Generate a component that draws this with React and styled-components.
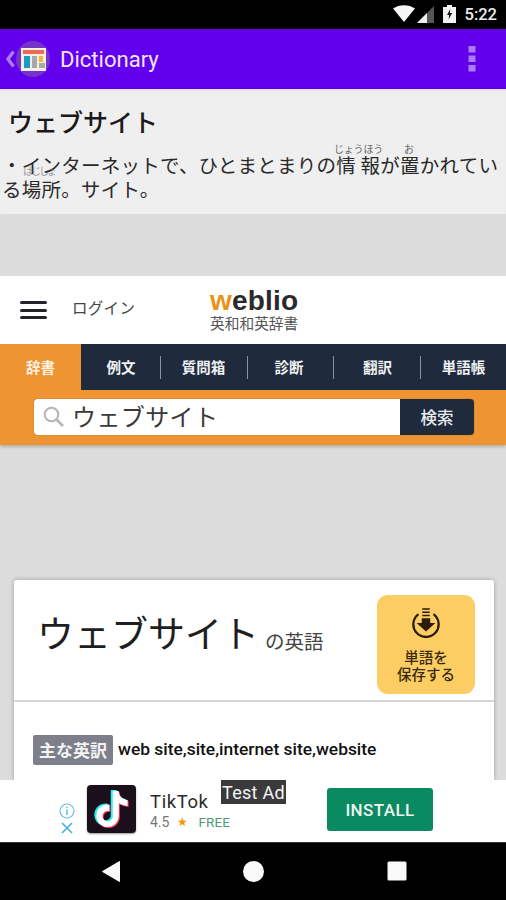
import React from "react";
import styled, { createGlobalStyle } from "styled-components";
import { SiTiktok } from "react-icons/si";

const Global = createGlobalStyle`
  html, body { margin: 0; padding: 0; background: #000; }
  * { box-sizing: border-box; }
  #root { width: 506px; height: 900px; }
`;
const JP = `"Noto Sans CJK JP", "Noto Sans", sans-serif`;
const Screen = styled.div`
  width: 506px; height: 900px; display: flex; flex-direction: column; overflow: hidden;
  background: #dcdcdc; font-family: ${JP}; color: #1c1c1c;
`;
const StatusBar = styled.div`
  height: 29px; flex: none; background: #000; display: flex; align-items: center; justify-content: flex-end;
  gap: 8px; padding: 0 9px 1px 0; color: #ececec; font: 500 16.5px Roboto, sans-serif;
`;
const StatusIcons = styled.div`display: flex; align-items: center; gap: 9px; margin-right: 1px;`;
const WifiGroup = styled.div`display: flex; align-items: center; gap: 2px;`;
const AppBar = styled.div`
  height: 60px; flex: none; background: #6200ee; display: flex; align-items: center; padding: 0 30px 0 5px; color: #f0e6ff;
`;
const AppTitle = styled.div`font: 400 22.5px Roboto, sans-serif; margin-left: 10px; flex: 1; transform: scaleX(.98); transform-origin: left;`;
const Definition = styled.section`
  height: 125px; flex: none; background: #efefef; padding: 16px 0 0 8px; position: relative;
  box-shadow: inset 0 3px 3px -2px #d8d8d8;
`;
const DefTitle = styled.h1`margin: 0; font: 500 25px/32px ${JP}; letter-spacing: 0; color: #1a1a1a;`;
const DefText = styled.p`
  margin: 16px 0 0 -6px; font: 400 19.5px/24px ${JP}; letter-spacing: .24px; color: #2a2a2a; white-space: nowrap;
`;
const Ruby = styled.span`
  position: absolute; font: 400 10px/10px ${JP}; letter-spacing: ${p => p.$sp ?? 0}px; color: ${p => p.$c || "#666"};
  left: ${p => p.$x}px; top: ${p => p.$y}px;
`;
const Gap = styled.div`height: ${p => p.$h}px; flex: none;`;
const WeblioHead = styled.header`
  height: 68px; flex: none; background: #fff; display: flex; align-items: center; padding: 0 0 0 20px;
`;
const Burger = styled.div`
  width: 27px; height: 18px; display: flex; flex-direction: column; justify-content: space-between;
  & > i { display: block; height: 3px; border-radius: 2px; background: #20232a; }
`;
const Login = styled.div`margin: 0 0 6px 25px; width: 102px; font: 400 15.5px ${JP}; color: #444; letter-spacing: .3px;`;
const Logo = styled.div`
  margin-left: 36px; display: flex; flex-direction: column; align-items: center; margin-top: -3px;
`;
const LogoWord = styled.div`
  font: 700 28px/28px "Liberation Sans", sans-serif; color: #2a2a2a; letter-spacing: .2px;
  & > b { color: #e8921c; }
`;
const LogoSub = styled.div`font: 400 14.7px/16px ${JP}; color: #555; white-space: nowrap;`;
const TabBar = styled.nav`
  height: 46px; flex: none; background: #1f2b3d; display: flex; align-items: center;
`;
const Tab = styled.div`
  flex: none; width: ${p => p.$w}px; height: 46px; display: flex; align-items: center; justify-content: center;
  font: 700 14.5px ${JP}; color: ${p => p.$active ? "#fff3e2" : "#eef0f2"};
  background: ${p => p.$active ? "#ee9433" : "transparent"};
  position: relative;
  padding: 0 ${p => p.$pr || 0}px 2px 0;
  ${p => p.$sep ? `&::after { content: ""; position: absolute; right: 0; top: 12px; height: 23px; width: 1px; background: #8a93a0; }` : ""}
`;
const SearchBar = styled.div`
  height: 55px; flex: none; background: #ee9433; padding: 9px 32px 0 34px; box-shadow: 0 2px 3px rgba(0,0,0,.2);
  position: relative;
`;
const SearchBox = styled.div`
  height: 36px; display: flex; border-radius: 4px; overflow: hidden; box-shadow: 0 0 1px rgba(0,0,0,.6);
`;
const SearchInput = styled.div`
  flex: 1; background: #fff; display: flex; align-items: center; padding: 0 0 2px 9px; gap: 8px;
  font: 400 24px ${JP}; color: #3a3a3a; letter-spacing: .4px; line-height: 1;
`;
const SearchButton = styled.div`
  width: 74px; background: #1f2b3d; color: #e9ebee; font: 500 16.5px ${JP}; display: flex; align-items: center; justify-content: center; padding-bottom: 1px;
`;
const Card = styled.article`
  margin: 0 12px 0 14px; flex: 1; min-height: 0; background: #fff; border-radius: 3px 3px 0 0; box-shadow: 0 0 4px rgba(0,0,0,.3);
`;
const CardHead = styled.div`
  height: 122px; display: flex; align-items: center; padding: 0 19px 2px 23px; border-bottom: 2px solid #d6d6d6;
`;
const CardTitle = styled.h2`margin: 0 0 14px; font: 400 37px ${JP}; color: #1e1e1e; white-space: nowrap;`;
const CardSuffix = styled.span`font: 400 19.5px ${JP}; color: #444; margin: 2px 0 0 6px; flex: 1;`;
const SaveButton = styled.div`
  width: 98px; height: 99px; margin-top: 10px; background: #fbcd62; border-radius: 11px; display: flex; flex-direction: column; align-items: center;
  padding-top: 13px; font: 500 14.5px/17px ${JP}; color: #3a2a10; text-align: center;
  & > svg { margin-bottom: 10px; }
`;
const CardBody = styled.div`display: flex; align-items: flex-start; padding: 33px 0 0 19px; gap: 5px;`;
const Label = styled.span`
  background: #7d7f8a; color: #f4f4f4; font: 700 17px/29px ${JP}; padding: 0 6px; border-radius: 2px; height: 30px; white-space: nowrap;
`;
const Words = styled.span`font: 500 17.4px/28px Roboto, sans-serif; color: #111; white-space: nowrap;`;
const AdBar = styled.div`
  height: 62px; flex: none; background: #fff; position: relative; display: flex; align-items: center; padding-left: 59px;
`;
const AdChoices = styled.div`display: flex; flex-direction: column; align-items: center; gap: 3px; margin-top: 15px;`;
const TikIcon = styled.div`
  width: 49px; height: 48px; margin: 0 0 4px 12px; background: #1c0f1c; border-radius: 4px; position: relative;
  box-shadow: 0 1px 2px rgba(0,0,0,.4);
`;
const TikLayer = styled.span`
  position: absolute; display: flex; left: ${p => 6.5 + p.$d}px; top: ${p => 6 + p.$e}px; color: ${p => p.$c};
`;
const AdInfo = styled.div`margin: 0 0 1px 14px; width: 177px;`;
const AdName = styled.div`font: 400 18.5px/24px Roboto, sans-serif; color: #2b2b2b; letter-spacing: .6px;`;
const AdMeta = styled.div`display: flex; align-items: center; margin-top: -1px; font: 400 14px/18px Roboto, sans-serif; color: #777;`;
const Star = styled.span`color: #f29900; margin: 0 10px 0 8px; font-size: 12px;`;
const Free = styled.span`color: #4f9a78; font-size: 13.5px; letter-spacing: .1px;`;
const Install = styled.div`
  width: 106px; height: 43px; margin-bottom: 3px; background: #0a8a60; color: #eef6f2; border-radius: 3px; display: flex; align-items: center; justify-content: center;
  font: 500 17px Roboto, sans-serif; letter-spacing: .4px;
`;
const TestAd = styled.div`
  position: absolute; left: 221px; top: 0; width: 65px; height: 24px; background: #3a3a3a; color: #f4f4f4;
  font: 400 18px/26px Roboto, sans-serif; text-align: center; white-space: nowrap; letter-spacing: .3px;
`;
const NavBar = styled.div`
  height: 58px; flex: none; background: #000; display: flex; align-items: center; padding: 0 0 1px 102px; border-top: 1px solid #333;
`;
const NavSlot = styled.div`display: flex; width: ${p => p.$w}px;`;

const Wifi = () => (
  <svg width="22" height="18" viewBox="0 0 22 18"><path d="M0 3.5 C6-1 16-1 22 3.5 L11 17Z" fill="#f5f5f5" /></svg>
);
const Signal = () => (
  <svg width="17" height="17" viewBox="0 0 17 17"><path d="M17 0V17H0Z" fill="#555" /><path d="M10 7V17H0Z" fill="#eee" /></svg>
);
const Battery = () => (
  <svg width="13" height="18" viewBox="0 0 13 18">
    <path d="M4 0h5v2h4v16H0V2h4Z" fill="#f2f2f2" />
    <path d="M7.3 4 4 10h2.2l-.6 4.4L9.1 8H6.8Z" fill="#111" />
  </svg>
);
const Back = () => (
  <svg width="11" height="20" viewBox="0 0 11 20"><path d="M8.5 2.5 3 10l5.5 7.5" stroke="#a77cf5" strokeWidth="3.4" fill="none" /></svg>
);
const AppIcon = () => (
  <svg width="34" height="36" viewBox="0 0 34 36">
    <ellipse cx="17" cy="18" rx="17" ry="18" fill="#7434c8" />
    <rect x="5" y="7" width="25" height="23" fill="#f3eee9" />
    <rect x="7" y="9" width="21" height="4" fill="#ee6a55" />
    <rect x="8" y="15" width="6" height="12" fill="#1e9bc4" />
    <rect x="16" y="15" width="5" height="12" fill="#a8a8a8" />
    <rect x="23" y="15" width="4" height="6" fill="#f7b733" />
    <rect x="23" y="22" width="6" height="5" fill="#a8a8a8" />
  </svg>
);
const Dots = () => (
  <svg width="8" height="26" viewBox="0 0 8 26" fill="#a77cf5">
    <rect x="0.5" y="0" width="7" height="6.5" /><rect x="0.5" y="9.5" width="7" height="6.5" /><rect x="0.5" y="19" width="7" height="6.5" />
  </svg>
);
const SearchGlyph = () => (
  <svg width="21" height="21" viewBox="0 0 21 21" fill="none" stroke="#b5b5b5" strokeWidth="2">
    <circle cx="8.5" cy="8.5" r="6.8" /><path d="M13.5 13.5 20 20" strokeWidth="2.6" />
  </svg>
);
const SaveIcon = () => (
  <svg width="32" height="30" viewBox="0 0 34 32" fill="none">
    <path d="M9 6.5A13.5 13.5 0 1 0 25 6.5" stroke="#2a1c08" strokeWidth="2.4" />
    <path d="M13 1h8M13 4.5h8M13 8h8" stroke="#2a1c08" strokeWidth="1.5" />
    <path d="M12.5 11h9v5H27L17 25 7 16h5.5Z" fill="#2a1c08" />
  </svg>
);
const InfoIcon = () => (
  <svg width="16" height="16" viewBox="0 0 16 16" fill="none" stroke="#6cc0e4" strokeWidth="1.2">
    <circle cx="8" cy="8" r="7" /><path d="M8 6.5V12M8 3.8v1.2" strokeWidth="1.6" />
  </svg>
);
const CloseIcon = () => (
  <svg width="12" height="12" viewBox="0 0 12 12" stroke="#4cb5dc" strokeWidth="1.7"><path d="M1 1l10 10M11 1 1 11" /></svg>
);

export default function App() {
  return (
    <Screen>
      <Global />
      <StatusBar>
        <StatusIcons><WifiGroup><Wifi /><Signal /></WifiGroup><Battery /></StatusIcons>
        5:22
      </StatusBar>
      <AppBar>
        <Back /><AppIcon /><AppTitle>Dictionary</AppTitle><Dots />
      </AppBar>
      <Definition>
        <DefTitle>ウェブサイト</DefTitle>
        <Ruby $x={334} $y={55} $sp={-.2}>じょうほう</Ruby>
        <Ruby $x={404} $y={55}>お</Ruby>
        <Ruby $x={23} $y={77} $c="#999" $sp={-2}>はじしょ</Ruby>
        <DefText>・インターネットで、ひとまとまりの情 報が置かれてい<br />る場所。サイト。</DefText>
      </Definition>
      <Gap $h={62} />
      <WeblioHead>
        <Burger><i /><i /><i /></Burger>
        <Login>ログイン</Login>
        <Logo>
          <LogoWord><b>w</b>eblio</LogoWord>
          <LogoSub>英和和英辞書</LogoSub>
        </Logo>
      </WeblioHead>
      <TabBar>
        <Tab $active $w={81}>辞書</Tab>
        <Tab $w={80} $sep>例文</Tab>
        <Tab $w={87} $sep $pr={2}>質問箱</Tab>
        <Tab $w={86} $sep $pr={4}>診断</Tab>
        <Tab $w={87} $sep>翻訳</Tab>
        <Tab $w={85}>単語帳</Tab>
      </TabBar>
      <SearchBar>
        <SearchBox>
          <SearchInput><SearchGlyph />ウェブサイト</SearchInput>
          <SearchButton>検索</SearchButton>
        </SearchBox>
      </SearchBar>
      <Gap $h={135} />
      <Card>
        <CardHead>
          <CardTitle>ウェブサイト</CardTitle>
          <CardSuffix>の英語</CardSuffix>
          <SaveButton><SaveIcon />単語を<br />保存する</SaveButton>
        </CardHead>
        <CardBody>
          <Label>主な英訳</Label>
          <Words>web site,site,internet site,website</Words>
        </CardBody>
      </Card>
      <AdBar>
        <AdChoices><InfoIcon /><CloseIcon /></AdChoices>
        <TikIcon>
          <TikLayer $d={-1.5} $e={-1} $c="#25f4ee"><SiTiktok size={36} /></TikLayer>
          <TikLayer $d={1.5} $e={1} $c="#fe2c55"><SiTiktok size={36} /></TikLayer>
          <TikLayer $d={0} $e={0} $c="#fff"><SiTiktok size={36} /></TikLayer>
        </TikIcon>
        <AdInfo>
          <AdName>TikTok</AdName>
          <AdMeta>4.5<Star>★</Star><Free>FREE</Free></AdMeta>
        </AdInfo>
        <Install>INSTALL</Install>
        <TestAd>Test Ad</TestAd>
      </AdBar>
      <NavBar>
        <NavSlot $w={141}>
          <svg width="18" height="21" viewBox="0 0 18 21"><path d="M17.5 0.5V20.5L0.5 10.5Z" fill="#fafafa" stroke="#fafafa" strokeLinejoin="round" /></svg>
        </NavSlot>
        <NavSlot $w={144}>
          <svg width="21" height="21" viewBox="0 0 21 21"><circle cx="10.5" cy="10.5" r="10.5" fill="#fafafa" /></svg>
        </NavSlot>
        <NavSlot $w={20}>
          <svg width="20" height="20" viewBox="0 0 20 20"><rect x="0.5" y="0.5" width="19" height="19" rx="1.5" fill="#fafafa" /></svg>
        </NavSlot>
      </NavBar>
    </Screen>
  );
}
